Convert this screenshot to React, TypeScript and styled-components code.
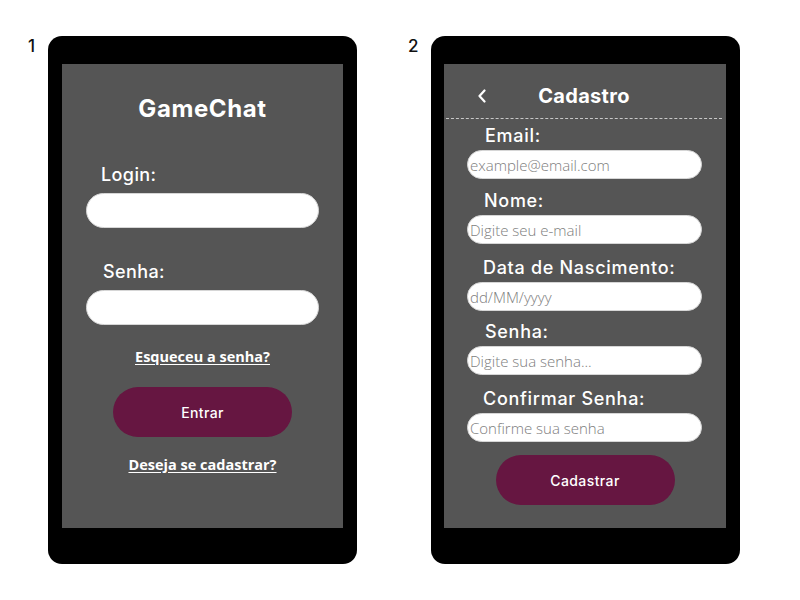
import styled, { createGlobalStyle } from "styled-components";

const Global = createGlobalStyle`
  body {
    margin: 0;
    background: #ffffff;
    font-family: "Inter", "Noto Sans", sans-serif;
  }
`

const Page = styled.div`
  display: flex;
  gap: 51px;
  padding: 36px 0 0 28px;
`

const Frame = styled.div`
  display: flex;
`

const Number = styled.div<{ $w: number }>`
  width: ${p => p.$w}px;
  font-family: "Inter", sans-serif;
  font-size: 17px;
  font-weight: 500;
  line-height: 20px;
  color: #111;
`

const Phone = styled.div<{ $left: number }>`
  width: 309px;
  height: 528px;
  box-sizing: border-box;
  background: #000;
  border-radius: 14px;
  padding: 28px 14px 36px ${p => p.$left}px;
`

const Screen = styled.div`
  height: 464px;
  background: #555555;
  display: flex;
  flex-direction: column;
`

const Title = styled.h1`
  margin: 30px 0 0;
  text-align: center;
  font-family: "Inter", sans-serif;
  font-size: 24px;
  font-weight: 700;
  line-height: 30px;
  color: #fff;
  letter-spacing: 0.6px;
`

const Label = styled.label<{ $top: number; $left: number; $lh?: number; $ls?: number }>`
  display: block;
  margin: ${p => p.$top}px 0 0 ${p => p.$left}px;
  font-family: "Inter", sans-serif;
  font-size: 18px;
  font-weight: 500;
  line-height: ${p => p.$lh ?? 22}px;
  color: #fff;
  letter-spacing: ${p => p.$ls ?? 0.4}px;
`

const Field = styled.input<{ $top: number; $left: number; $w: number; $h: number }>`
  display: block;
  box-sizing: border-box;
  margin: ${p => p.$top}px 0 0 ${p => p.$left}px;
  width: ${p => p.$w}px;
  height: ${p => p.$h}px;
  border: 1px solid #d6d6d6;
  border-radius: 18px;
  background: #fff;
  padding: 0 0 0 2px;
  outline: none;
  font-family: "Open Sans", sans-serif;
  font-weight: 300;
  font-size: 15px;
  color: #555;
  &::placeholder {
    color: #7d7d7d;
  }
`

const Link = styled.a<{ $top: number }>`
  display: block;
  margin-top: ${p => p.$top}px;
  text-align: center;
  font-family: "Open Sans", sans-serif;
  font-weight: 700;
  font-size: 14.5px;
  line-height: 20px;
  color: #fff;
  text-decoration: underline;
  text-underline-offset: 2px;
`

const Button = styled.button<{ $top: number }>`
  display: block;
  margin: ${p => p.$top}px auto 0;
  width: 179px;
  height: 50px;
  border: none;
  border-radius: 25px;
  background: #661641;
  color: #fff;
  font-family: "Inter", sans-serif;
  font-size: 14px;
  font-weight: 500;
  letter-spacing: 0.4px;
`

const Header = styled.div`
  position: relative;
  margin: 0 4px 0 2px;
  padding: 20px 0 10px;
  border-bottom: 1px dashed #c8c8c8;
  text-align: center;
  font-family: "Inter", sans-serif;
  font-size: 20px;
  font-weight: 700;
  line-height: 24px;
  color: #fff;
  letter-spacing: 0.3px;
`

const Back = styled.span`
  position: absolute;
  left: 31px;
  top: 25px;
  display: flex;
`

const Block = styled.div`
  display: flex;
  flex-direction: column;
`

const Chevron = () => (
  <svg width="10" height="14" viewBox="0 0 10 14">
    <path d="M7.5 1.5 L2.5 7 L7.5 12.5" fill="none" stroke="#fff" strokeWidth="2.2" strokeLinecap="round" strokeLinejoin="round" />
  </svg>
)

const campos = [
  { label: "Email:", ph: "example@email.com", left: 41, top: 7 },
  { label: "Nome:", ph: "Digite seu e-mail", left: 40, top: 12 },
  { label: "Data de Nascimento:", ph: "dd/MM/yyyy", left: 39, top: 14 },
  { label: "Senha:", ph: "Digite sua senha...", left: 41, top: 11 },
  { label: "Confirmar Senha:", ph: "Confirme sua senha", left: 39, top: 14 },
]

export default function App() {
  return (
    <>
      <Global />
      <Page>
        <Frame>
          <Number $w={20}>1</Number>
          <Phone $left={14}>
            <Screen>
              <Title>GameChat</Title>
              <Label $top={40} $left={39}>Login:</Label>
              <Field $top={7} $left={24} $w={233} $h={35} />
              <Label $top={33} $left={41}>Senha:</Label>
              <Field $top={7} $left={24} $w={233} $h={35} type="password" />
              <Link $top={22}>Esqueceu a senha?</Link>
              <Button $top={20}>Entrar</Button>
              <Link $top={18}>Deseja se cadastrar?</Link>
            </Screen>
          </Phone>
        </Frame>
        <Frame>
          <Number $w={23}>2</Number>
          <Phone $left={13}>
            <Screen>
              <Header>
                <Back><Chevron /></Back>
                Cadastro
              </Header>
              {campos.map(c => (
                <Block key={c.label}>
                  <Label $top={c.top} $left={c.left} $lh={20} $ls={0.7}>{c.label}</Label>
                  <Field $top={4} $left={23} $w={235} $h={29} placeholder={c.ph} />
                </Block>
              ))}
              <Button $top={13}>Cadastrar</Button>
            </Screen>
          </Phone>
        </Frame>
      </Page>
    </>
  );
}
